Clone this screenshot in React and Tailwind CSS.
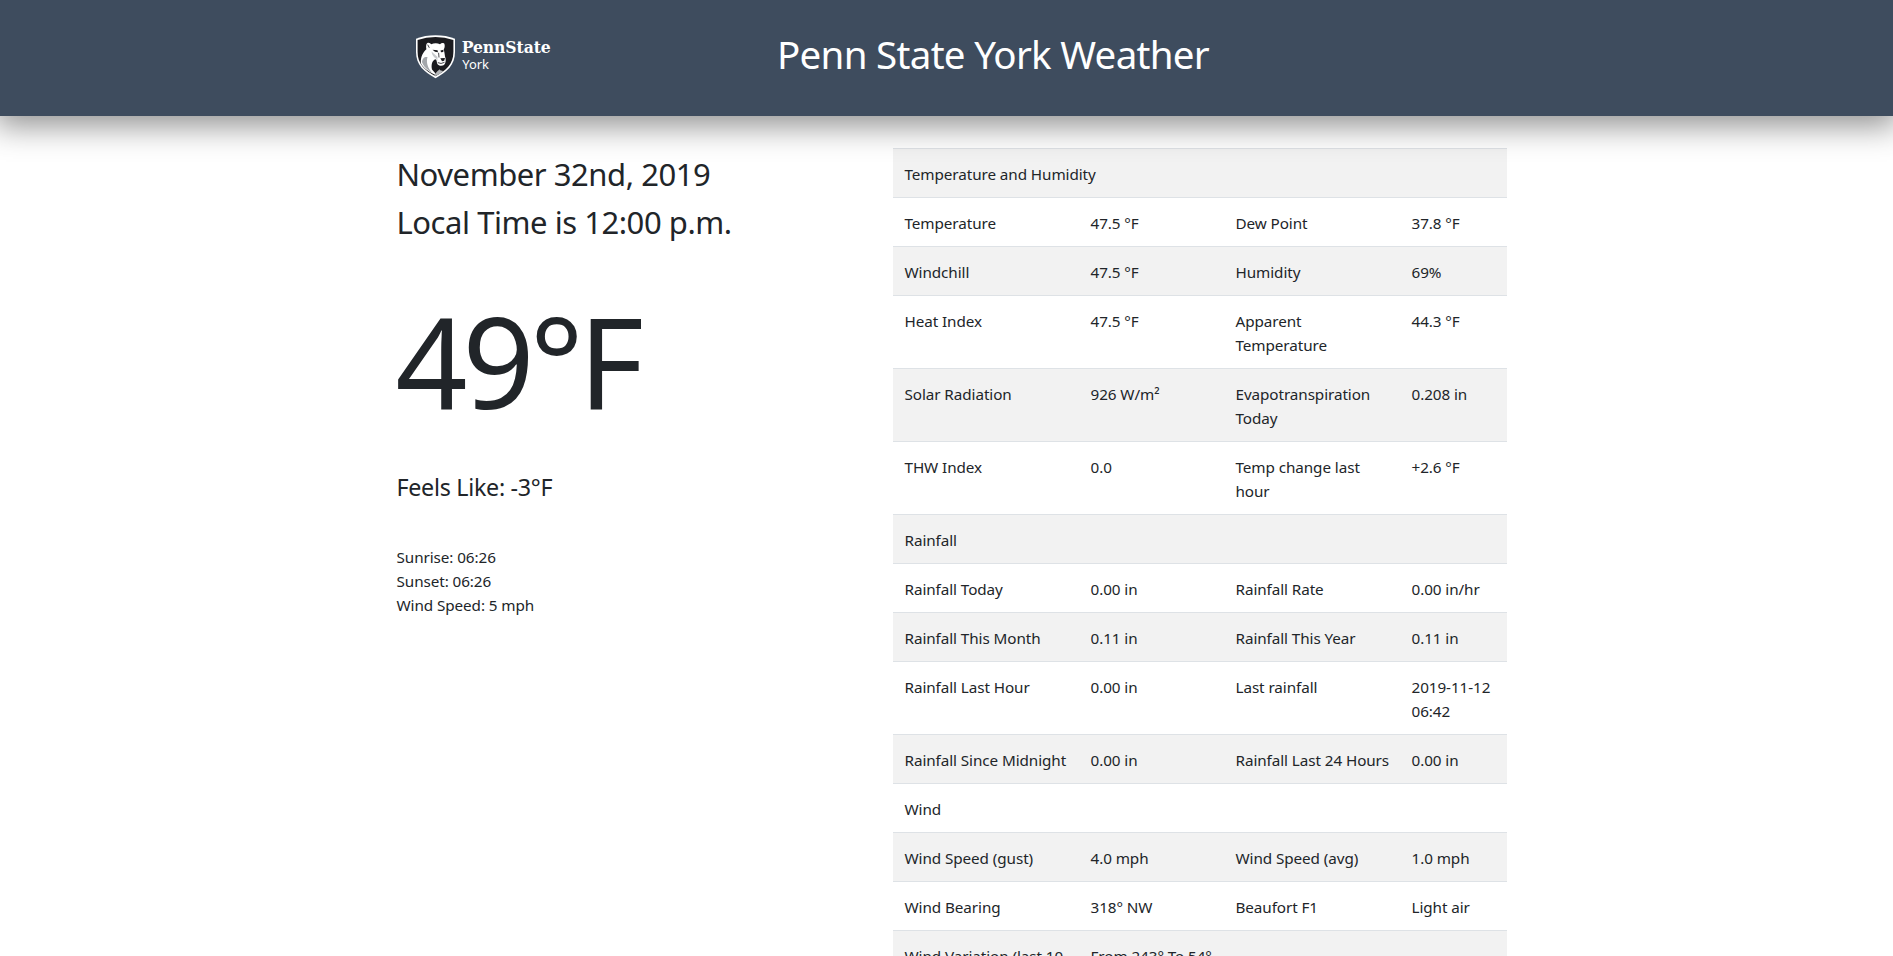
const rows = [
  ["Temperature and Humidity", "", "", ""],
  ["Temperature", "47.5 °F", "Dew Point", "37.8 °F"],
  ["Windchill", "47.5 °F", "Humidity", "69%"],
  ["Heat Index", "47.5 °F", "Apparent Temperature", "44.3 °F"],
  ["Solar Radiation", "926 W/m²", "Evapotranspiration Today", "0.208 in"],
  ["THW Index", "0.0", "Temp change last hour", "+2.6 °F"],
  ["Rainfall", "", "", ""],
  ["Rainfall Today", "0.00 in", "Rainfall Rate", "0.00 in/hr"],
  ["Rainfall This Month", "0.11 in", "Rainfall This Year", "0.11 in"],
  ["Rainfall Last Hour", "0.00 in", "Last rainfall", "2019-11-12 06:42"],
  ["Rainfall Since Midnight", "0.00 in", "Rainfall Last 24 Hours", "0.00 in"],
  ["Wind", "", "", ""],
  ["Wind Speed (gust)", "4.0 mph", "Wind Speed (avg)", "1.0 mph"],
  ["Wind Bearing", "318° NW", "Beaufort F1", "Light air"],
  ["Wind Variation (last 10 minutes)", "From 243° To 54°", "", ""],
];

function Logo() {
  return (
    <svg className="block h-[46px] w-[140px]" viewBox="0 0 140 46" role="img" aria-label="PennState York">
      <path d="M1 3.700Q10 .3 20.500.3T40 3.700V17C40 30 32 37 20.500 43.200C9 37 1 30 1 17Z" fill="#fff" />
      <path d="M2.600 4.900Q11 1.900 20.500 1.900T38.400 4.900V17C38.400 29 31 35.600 20.500 41.300C10 35.600 2.600 29 2.600 17Z" fill="#1b1b1f" />
      <g transform="translate(0 -1)">
        <path d="M5.800 29C5.600 22 8.500 18 11.400 15.200C10.800 12 11.200 9 13 8.700C14.500 8.500 15.500 9.400 16.200 10.200C19 9 22.500 9 25 10.200C26.500 8.700 29 8.800 29.500 10.200C30 12 29.600 14 28.800 15.300C29.300 18 29.800 20 30 22.500C31.200 25 31 29 29 31C27 32.300 23.500 32 22.400 30C21.500 28 22 26 20.500 25.300C17 26.500 16 31 17 35.500L20.500 39.500L19.500 40.600C13 37.200 7.800 33.500 5.800 29Z" fill="#fff" />
        <path d="M7 28C7.500 23.500 10 22.500 12.500 23C11 28 12.500 34 17 38.600C12 35.500 8.300 32.500 7 28Z" fill="#a4a7ab" />
        <path d="M18.800 41.200C21 39.500 21.800 37 24.800 35.200C25.200 37 27.500 36.200 28 37.400Q25 40 20.500 42Z" fill="#b4b6b9" />
        <path d="M17.500 15.700L22.500 16.300L23 18.300L20 17.800ZM25.500 16.500L28.500 15.700L28.300 18L26 18.300ZM25.300 24.200L30 24L29.200 26.800L27 27.200Z" fill="#1b1b1f" />
        <path d="M22.800 28.600Q26 30.500 29.500 28.300M12.700 10.700L14.300 13.800M23.600 18.800L24 23.500" fill="none" stroke="#35363b" strokeWidth=".9" />
        <path d="M16.500 17.500Q17 22 21 24.500L22.300 27L22.500 23Z" fill="#c8cacd" />
      </g>
      <text x="46.700" y="17.700" fill="#fff" className="font-['DejaVu_Serif',serif] text-[16px] font-bold" textLength="89" lengthAdjust="spacingAndGlyphs">PennState</text>
      <text x="47.300" y="34" fill="#fff" className="font-['Noto_Sans',sans-serif] text-[13px]" textLength="26.500" lengthAdjust="spacingAndGlyphs">York</text>
    </svg>
  );
}

export default function App() {
  return (
    <div className="h-screen overflow-hidden bg-white font-['Noto_Sans',sans-serif] text-[15.25px] leading-6 tracking-[-0.08px] text-[#212529]">
      <header className="relative z-10 flex h-[116px] items-start bg-[#3e4c5e] shadow-[0_5px_30px_5px_rgba(0,0,0,0.43)]">
        <div className="w-[777px] pt-[35px] pl-[415px]">
          <Logo />
        </div>
        <h1 className="pt-[30px] text-[38.5px] leading-[48px] tracking-[-0.7px] text-white">Penn State York Weather</h1>
      </header>
      <main className="flex">
        <section className="w-[893px] pt-[34px] pl-[396.500px]">
          <div className="text-[31px] leading-[48px] tracking-[-0.45px]">
            <h2>November 32nd, 2019</h2>
            <h2>Local Time is 12:00 p.m.</h2>
          </div>
          <p className="mt-[39px] -ml-[1px] text-[126px] leading-[150px] tracking-[-5px]">49°F</p>
          <p className="mt-[34px] text-[23.25px] leading-9 tracking-[-0.28px]">Feels Like: -3°F</p>
          <div className="mt-10">
            <p>Sunrise: 06:26</p>
            <p>Sunset: 06:26</p>
            <p>Wind Speed: 5 mph</p>
          </div>
        </section>
        <table className="mt-8 w-[614px] table-fixed border-collapse">
          <colgroup>
            <col className="w-[186px]" />
            <col className="w-[145px]" />
            <col className="w-[176px]" />
            <col className="w-[107px]" />
          </colgroup>
          <tbody>
            {rows.map((row, i) => (
              <tr key={i} className="border-t border-[#dee2e6] odd:bg-[#f2f2f2]">
                {row[1] ? (
                  row.map((cell, j) => (
                    <td key={j} className="pt-[13px] pr-2 pb-[11px] pl-[11.5px] align-top">
                      {cell}
                    </td>
                  ))
                ) : (
                  <td colSpan={4} className="px-[11.5px] pt-[13px] pb-[11px]">
                    {row[0]}
                  </td>
                )}
              </tr>
            ))}
          </tbody>
        </table>
      </main>
    </div>
  );
}
